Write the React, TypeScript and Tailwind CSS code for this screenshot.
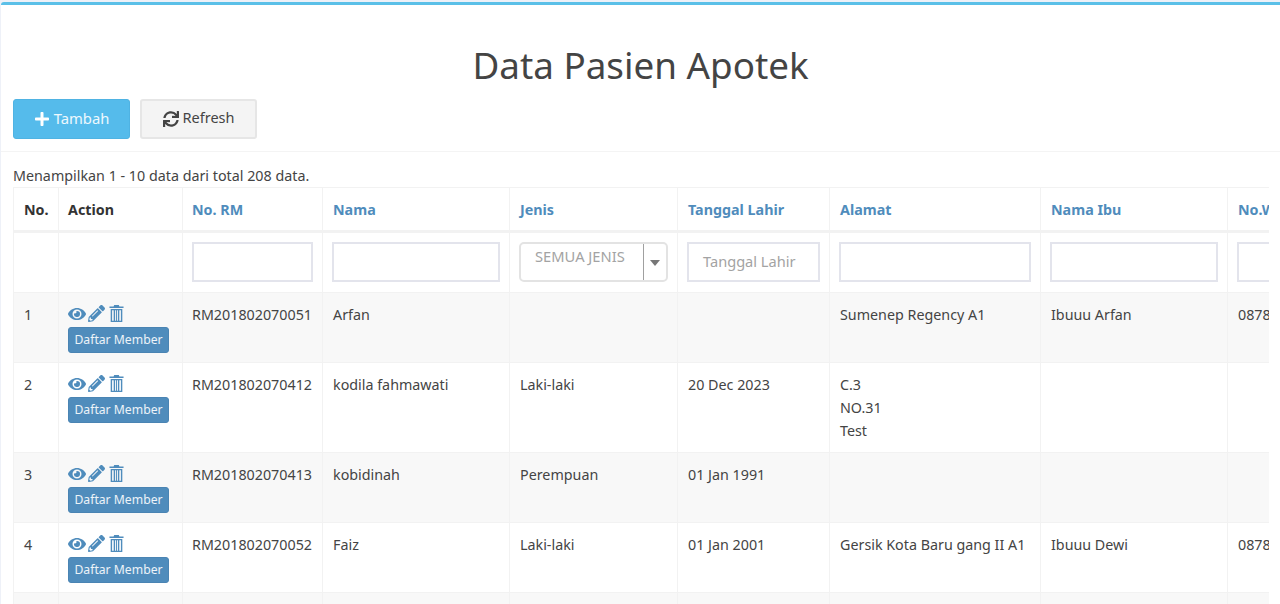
import React from "react";
import { FaEye, FaPencilAlt, FaPlus, FaSync } from "react-icons/fa";

const widths = [45, 124, 140, 187, 168, 152, 211, 187, 120];
const headers = ["No.", "Action", "No. RM", "Nama", "Jenis", "Tanggal Lahir", "Alamat", "Nama Ibu", "No.WA"];
const headerPad = ["pl-[10px]", "pl-[9px]", "pl-[9px]", "pl-[10px]", "pl-[10px]", "pl-[10px]", "pl-[10px]", "pl-[10px]", "pl-[10px]"];

function Trash() {
  return (
    <svg viewBox="0 0 16 18" className="w-[15px] h-[17px] text-[#4f8cbc]" fill="currentColor">
      <path d="M5.5 0h5l.6 1.6H15.500V3.200H.5V1.600H4.900zM1.800 4.200H14.200V18H1.800ZM3.300 5.600V16.600H5V5.600ZM6.500 5.600V16.600H7.500V5.600ZM8.500 5.600V16.600H9.500V5.600ZM11 5.600V16.600H12.700V5.600Z" fillRule="evenodd" />
    </svg>
  );
}

function Actions() {
  return (
    <div>
      <div className="flex items-center h-[19px] text-[#4f8cbc]">
        <FaEye className="w-[18px] h-[18px]" />
        <FaPencilAlt className="w-[17px] h-[17px] ml-[2px]" />
        <span className="ml-[4px]"><Trash /></span>
      </div>
      <div className="mt-[4px] inline-block bg-[#4f8cbc] border border-[#4a84b3] rounded-[3px] text-white/90 text-[12.2px] leading-[24px] w-[101px] text-center whitespace-nowrap">Daftar Member</div>
    </div>
  );
}

const rows = [
  { h: "h-[70px]", bg: "bg-[#f8f8f8]", no: "1", rm: "RM201802070051", nama: "Arfan", jenis: "", tgl: "", alamat: ["Sumenep Regency A1"], ibu: "Ibuuu Arfan", wa: "0878" },
  { h: "h-[90px]", bg: "bg-white", no: "2", rm: "RM201802070412", nama: "kodila fahmawati", jenis: "Laki-laki", tgl: "20 Dec 2023", alamat: ["C.3", "NO.31", "Test"], ibu: "", wa: "" },
  { h: "h-[70px]", bg: "bg-[#f8f8f8]", no: "3", rm: "RM201802070413", nama: "kobidinah", jenis: "Perempuan", tgl: "01 Jan 1991", alamat: [], ibu: "", wa: "" },
  { h: "h-[70px]", bg: "bg-white", no: "4", rm: "RM201802070052", nama: "Faiz", jenis: "Laki-laki", tgl: "01 Jan 2001", alamat: ["Gersik Kota Baru gang II A1"], ibu: "Ibuuu Dewi", wa: "0878" },
  { h: "h-[70px]", bg: "bg-[#f8f8f8]", no: "", rm: "", nama: "", jenis: "", tgl: "", alamat: [], ibu: "", wa: "" },
];

const td = "border border-[#f2f2f2] px-[10px] pt-[10px] align-top leading-[23px] whitespace-nowrap overflow-hidden";
const filterTd = "border border-[#f2f2f2] align-top pt-[9px] px-[9px]";
const inputCls = "block h-[40px] border-2 border-[#e3e4ec] bg-white";

export default function App() {
  return (
    <div className="h-[604px] overflow-hidden bg-[#eef1f8] pt-[2px] pl-[1px] text-[#444444] text-[14.3px] font-['Noto_Sans','Liberation_Sans',sans-serif]">
      <div className="h-[602px] bg-white border-t-[3px] border-[#5bc0e8] rounded-tl-[3px] overflow-hidden">
        <h1 className="pt-[35px] text-center text-[36.8px] leading-[50px] text-[#444444]">Data Pasien Apotek</h1>
        <div className="flex gap-[10px] pl-[12px] mt-[9px] pb-[12px] border-b border-[#f4f4f4]">
          <button className="w-[117px] h-[40px] pb-[2px] bg-[#55bbeb] border border-[#4fb3e3] rounded-[3px] text-white/90 text-[14.8px] flex items-center justify-center gap-[4px]">
            <FaPlus className="w-[16px] h-[16px] text-white mt-[1px]" />Tambah
          </button>
          <button className="w-[117px] h-[40px] pb-[2px] bg-[#f4f4f4] border-2 border-[#e6e6e6] rounded-[3px] text-[#444444] text-[14.5px] flex items-center justify-center gap-[4px]">
            <FaSync className="w-[16px] h-[16px] mt-[1px]" />Refresh
          </button>
        </div>
        <div className="pl-[12px] pt-[13px] leading-[21px] h-[35px]">Menampilkan 1 - 10 data dari total 208 data.</div>
        <div className="ml-[12px] w-[1256px] overflow-hidden">
          <table className="table-fixed border-collapse w-[1334px]">
            <colgroup>
              {widths.map((w, i) => <col key={i} style={{ width: w }} />)}
            </colgroup>
            <thead>
              <tr className="h-[44px]">
                {headers.map((h, i) => (
                  <th key={h} className={`border border-[#f2f2f2] border-b-[3px] ${headerPad[i]} pr-[10px] pt-[2px] text-left font-bold whitespace-nowrap ${i < 2 ? "text-[#333333]" : "text-[#4f8cbc]"}`}>{h}</th>
                ))}
              </tr>
              <tr className="h-[61px]">
                <td className="border border-[#f2f2f2]"></td>
                <td className="border border-[#f2f2f2]"></td>
                <td className={filterTd}><div className={inputCls} /></td>
                <td className={filterTd}><div className={inputCls} /></td>
                <td className={filterTd}>
                  <div className="flex h-[40px] border-2 border-[#e3e3e3] rounded-[5px] text-[#a3a3a3] text-[14.7px]">
                    <div className="w-[123px] border-r border-[#a0a0a0] pl-[14px] leading-[25px]">SEMUA JENIS</div>
                    <div className="flex-1 flex items-center justify-center">
                      <span className="w-0 h-0 border-x-[5px] border-x-transparent border-t-[6px] border-t-[#777777] mt-[2px]" />
                    </div>
                  </div>
                </td>
                <td className={filterTd}>
                  <div className={`${inputCls} pl-[14px] leading-[34px] text-[#a3a3a3] text-[14.6px]`}>Tanggal Lahir</div>
                </td>
                <td className={filterTd}><div className={inputCls} /></td>
                <td className={filterTd}><div className={inputCls} /></td>
                <td className={filterTd}><div className={inputCls} /></td>
              </tr>
            </thead>
            <tbody>
              {rows.map((r, i) => (
                <tr key={i} className={`${r.h} ${r.bg}`}>
                  <td className={td}>{r.no}</td>
                  <td className="border border-[#f2f2f2] px-[9px] pt-[11px] align-top"><Actions /></td>
                  <td className={`${td} pl-[9px]`}>{r.rm}</td>
                  <td className={td}>{r.nama}</td>
                  <td className={td}>{r.jenis}</td>
                  <td className={td}>{r.tgl}</td>
                  <td className={td}>{r.alamat.map((a) => <div key={a}>{a}</div>)}</td>
                  <td className={td}>{r.ibu}</td>
                  <td className={td}>{r.wa}</td>
                </tr>
              ))}
            </tbody>
          </table>
        </div>
      </div>
    </div>
  );
}
